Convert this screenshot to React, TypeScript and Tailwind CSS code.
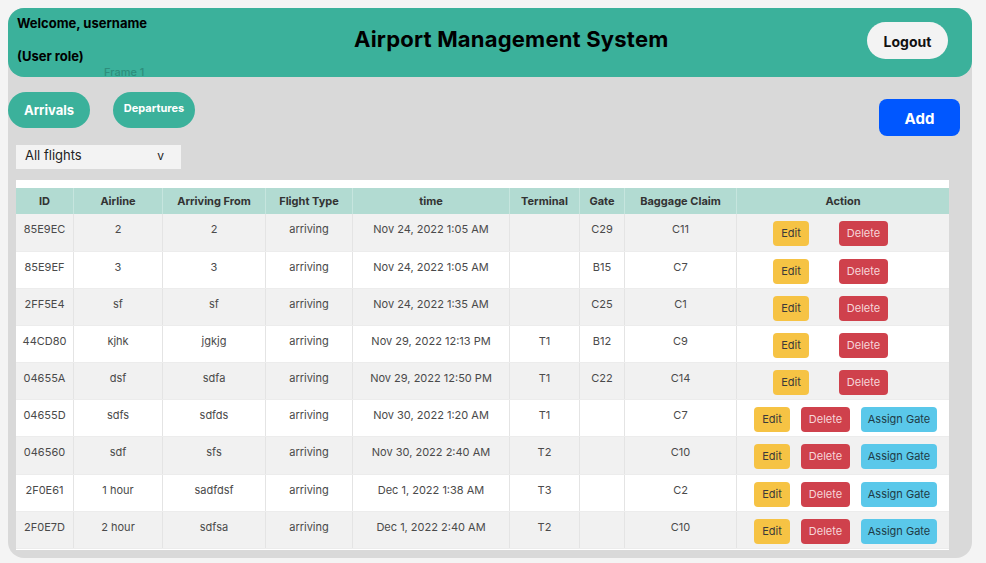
import React from "react";

type Row = {
  id: string;
  airline: string;
  from: string;
  type: string;
  time: string;
  terminal: string;
  gate: string;
  claim: string;
  assign: boolean;
  h: string;
  bg: string;
};

const rows: Row[] = [
  { id: "85E9EC", airline: "2", from: "2", type: "arriving", time: "Nov 24, 2022 1:05 AM", terminal: "", gate: "C29", claim: "C11", assign: false, h: "h-[38px]", bg: "bg-[#f1f1f1]" },
  { id: "85E9EF", airline: "3", from: "3", type: "arriving", time: "Nov 24, 2022 1:05 AM", terminal: "", gate: "B15", claim: "C7", assign: false, h: "h-[37px]", bg: "bg-white" },
  { id: "2FF5E4", airline: "sf", from: "sf", type: "arriving", time: "Nov 24, 2022 1:35 AM", terminal: "", gate: "C25", claim: "C1", assign: false, h: "h-[37px]", bg: "bg-[#f1f1f1]" },
  { id: "44CD80", airline: "kjhk", from: "jgkjg", type: "arriving", time: "Nov 29, 2022 12:13 PM", terminal: "T1", gate: "B12", claim: "C9", assign: false, h: "h-[37px]", bg: "bg-white" },
  { id: "04655A", airline: "dsf", from: "sdfa", type: "arriving", time: "Nov 29, 2022 12:50 PM", terminal: "T1", gate: "C22", claim: "C14", assign: false, h: "h-[37px]", bg: "bg-[#f1f1f1]" },
  { id: "04655D", airline: "sdfs", from: "sdfds", type: "arriving", time: "Nov 30, 2022 1:20 AM", terminal: "T1", gate: "", claim: "C7", assign: true, h: "h-[37px]", bg: "bg-white" },
  { id: "046560", airline: "sdf", from: "sfs", type: "arriving", time: "Nov 30, 2022 2:40 AM", terminal: "T2", gate: "", claim: "C10", assign: true, h: "h-[38px]", bg: "bg-[#f1f1f1]" },
  { id: "2F0E61", airline: "1 hour", from: "sadfdsf", type: "arriving", time: "Dec 1, 2022 1:38 AM", terminal: "T3", gate: "", claim: "C2", assign: true, h: "h-[37px]", bg: "bg-white" },
  { id: "2F0E7D", airline: "2 hour", from: "sdfsa", type: "arriving", time: "Dec 1, 2022 2:40 AM", terminal: "T2", gate: "", claim: "C10", assign: true, h: "h-[37px]", bg: "bg-[#f1f1f1]" },
];

const headers = ["ID", "Airline", "Arriving From", "Flight Type", "time", "Terminal", "Gate", "Baggage Claim", "Action"];

const grid = "grid grid-cols-[58px_89px_103px_87px_157px_70px_45px_112px_212px]";

function Cell({ children }: { children?: React.ReactNode }) {
  return (
    <div className="border-r border-[#e4e4e4] pt-[8px] text-center text-[11px] leading-[14px] text-[#4a4a4a] last:border-r-0">
      {children}
    </div>
  );
}

export default function App() {
  return (
    <div
      className="w-[986px] h-[563px] bg-[#f4f4f4] pt-[8px] pl-[8px] overflow-hidden"
      style={{ fontFamily: "Inter, 'Noto Sans', sans-serif" }}
    >
      <div className="relative w-[964px] h-[550px] rounded-[16px] bg-[#d9d9d9]">
        {/* Header */}
        <div className="flex h-[69px] rounded-[16px] bg-[#3bb19b]">
          <div className="w-[346px] pl-[9px] pt-[7px] text-[13px] font-bold leading-[16px] text-black">
            <div>Welcome, username</div>
            <div className="mt-[17px]">(User role)</div>
          </div>
          <div className="pt-[17px] text-[22px] font-bold leading-[28px] tracking-[0.2px] text-black">
            Airport Management System
          </div>
          <div className="ml-auto mr-[24px] mt-[14px] flex h-[37px] w-[81px] items-center justify-center rounded-full bg-[#f3f3f3] pt-[2px] text-[14px] font-bold text-[#111]">
            Logout
          </div>
        </div>
        <div className="absolute left-[96px] top-[57px] text-[11px] font-medium leading-[14px] text-[#2e8e7c]">
          Frame 1
        </div>

        {/* Tabs + Add */}
        <div className="mt-[15px] flex items-start">
          <div className="flex h-[36px] w-[82px] items-center justify-center rounded-full bg-[#3bb19b] pt-[2px] text-[13px] font-bold text-white">
            Arrivals
          </div>
          <div className="ml-[23px] flex h-[36px] w-[82px] items-center justify-center rounded-full bg-[#3bb19b] pb-[3px] text-[11px] font-bold text-white">
            Departures
          </div>
          <div className="ml-auto mr-[12px] mt-[7px] flex h-[37px] w-[81px] items-center justify-center rounded-[8px] bg-[#0057ff] pt-[3px] text-[15px] font-bold text-white">
            Add
          </div>
        </div>

        {/* Select */}
        <div className="ml-[8px] mt-[9px] flex h-[24px] w-[165px] items-center bg-[#f3f3f3] pb-[3px] pl-[9px] text-[13px] text-[#222]">
          <span>All flights</span>
          <span className="ml-auto mr-[17px] text-[12px]">v</span>
        </div>

        {/* Table */}
        <div className="ml-[8px] mt-[11px] h-[370px] w-[933px] bg-white pt-[8px]">
          <div className={`${grid} h-[26px] bg-[#b2dbd2]`}>
            {headers.map((h) => (
              <div
                key={h}
                className="flex items-center justify-center border-r border-[#c6e5de] text-[11px] font-bold text-[#333] last:border-r-0"
              >
                {h}
              </div>
            ))}
          </div>
          {rows.map((r) => (
            <div key={r.id} className={`${grid} ${r.h} ${r.bg} border-b border-[#ececec]`}>
              <Cell>{r.id}</Cell>
              <Cell>{r.airline}</Cell>
              <Cell>{r.from}</Cell>
              <Cell>{r.type}</Cell>
              <Cell>{r.time}</Cell>
              <Cell>{r.terminal}</Cell>
              <Cell>{r.gate}</Cell>
              <Cell>{r.claim}</Cell>
              {r.assign ? (
                <div className="flex items-start gap-[11px] pl-[17px] pt-[7px]">
                  <div className="flex h-[25px] w-[36px] items-center justify-center rounded-[4px] bg-[#f6c344] text-[11px] text-[#3a3a3a]">Edit</div>
                  <div className="flex h-[25px] w-[49px] items-center justify-center rounded-[4px] bg-[#cf414c] text-[11px] text-[#f6d6d9]">Delete</div>
                  <div className="flex h-[25px] w-[76px] items-center justify-center rounded-[4px] bg-[#5ac8ea] text-[11px] text-[#1f3b46]">Assign Gate</div>
                </div>
              ) : (
                <div className="flex items-start gap-[30px] pl-[36px] pt-[7px]">
                  <div className="flex h-[25px] w-[36px] items-center justify-center rounded-[4px] bg-[#f6c344] text-[11px] text-[#3a3a3a]">Edit</div>
                  <div className="flex h-[25px] w-[49px] items-center justify-center rounded-[4px] bg-[#cf414c] text-[11px] text-[#f6d6d9]">Delete</div>
                </div>
              )}
            </div>
          ))}
        </div>
      </div>
    </div>
  );
}
